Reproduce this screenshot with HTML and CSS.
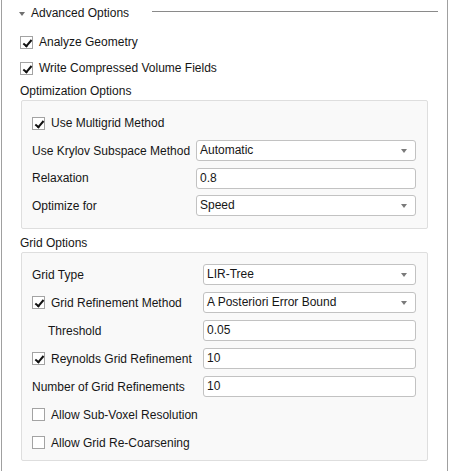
FILE: index.html
```html
<!DOCTYPE html>
<html lang="en">
<head>
    <meta charset="UTF-8">
    <title>Advanced Options</title>
    <link rel="stylesheet" href="styles.css">
</head>
<body>
    <div class="panel">
        <div class="section-head">
            <span class="caret"></span>
            <span class="section-title">Advanced Options</span>
            <span class="section-rule"></span>
        </div>

        <div class="top-checks">
            <label class="check-row top"><span class="box checked"></span>Analyze Geometry</label>
            <label class="check-row top"><span class="box checked"></span>Write Compressed Volume Fields</label>
        </div>

        <div class="group-title">Optimization Options</div>
        <div class="group opt">
            <label class="check-row span"><span class="box checked"></span>Use Multigrid Method</label>

            <div class="label">Use Krylov Subspace Method</div>
            <div class="field combo">Automatic</div>

            <div class="label">Relaxation</div>
            <div class="field">0.8</div>

            <div class="label">Optimize for</div>
            <div class="field combo">Speed</div>
        </div>

        <div class="group-title">Grid Options</div>
        <div class="group grid">
            <div class="label">Grid Type</div>
            <div class="field combo">LIR-Tree</div>

            <label class="check-row"><span class="box checked"></span>Grid Refinement Method</label>
            <div class="field combo">A Posteriori Error Bound</div>

            <div class="label indent">Threshold</div>
            <div class="field">0.05</div>

            <label class="check-row"><span class="box checked"></span>Reynolds Grid Refinement</label>
            <div class="field">10</div>

            <div class="label">Number of Grid Refinements</div>
            <div class="field">10</div>

            <label class="check-row span"><span class="box"></span>Allow Sub-Voxel Resolution</label>
            <label class="check-row span"><span class="box"></span>Allow Grid Re-Coarsening</label>
        </div>
    </div>
</body>
</html>
```

FILE: styles.css
```css
* {
    margin: 0;
    padding: 0;
    box-sizing: border-box;
}

body {
    font-family: 'Liberation Sans', Arial, sans-serif;
    font-size: 12px;
    color: #161616;
    background: white;
}

.panel {
    width: 447px;
    height: 471px;
    margin-left: 1px;
    border-left: 1px solid #a0a0a0;
    border-right: 1px solid #a0a0a0;
    padding: 0 19px 0 18px;
}

.section-head {
    display: flex;
    align-items: center;
    height: 26px;
    margin-right: -10px;
}

.caret {
    width: 0;
    height: 0;
    border-left: 3px solid transparent;
    border-right: 3px solid transparent;
    border-top: 4px solid #707070;
    margin: 1px 6px 0 -1px;
}

.section-title {
    font-size: 12px;
}

.section-rule {
    flex: 1;
    height: 1px;
    background: #8a8a8a;
    margin: 0 0 3px 23px;
}

.top-checks {
    padding-top: 3px;
}

.check-row {
    display: flex;
    align-items: center;
    height: 22px;
}

.check-row.top {
    height: 26px;
}

.box {
    width: 13px;
    height: 13px;
    border: 1px solid #a3a3a3;
    background: white;
    margin-right: 6px;
    position: relative;
    flex: none;
}

.box.checked::after {
    content: '';
    position: absolute;
    left: 4px;
    top: 1px;
    width: 3px;
    height: 7px;
    border-right: 2px solid #111;
    border-bottom: 2px solid #111;
    transform: rotate(40deg);
}

.group-title {
    height: 18px;
    line-height: 18px;
    margin-top: 1px;
}

.group {
    margin-left: 1px;
    width: 407px;
    background: #f9f9f9;
    border: 1px solid #dedede;
    border-radius: 2px;
    display: grid;
    align-items: center;
    padding: 11px 11px 11px 10px;
}

.group.opt {
    grid-template-columns: 164px 1fr;
    row-gap: 5.5px;
    margin-bottom: 5px;
}

.group.grid {
    grid-template-columns: 171px 1fr;
    row-gap: 6px;
    padding-bottom: 6px;
}

.span {
    grid-column: 1 / -1;
}

.label {
    height: 22px;
    line-height: 22px;
}

.label.indent {
    padding-left: 16px;
}

.field {
    height: 21px;
    line-height: 19px;
    background: white;
    border: 1px solid #c2c2c2;
    border-radius: 3px;
    padding-left: 3px;
    position: relative;
}

.combo::after {
    content: '';
    position: absolute;
    right: 8px;
    top: 8px;
    border-left: 3.5px solid transparent;
    border-right: 3.5px solid transparent;
    border-top: 4px solid #7a7a7a;
}
```
